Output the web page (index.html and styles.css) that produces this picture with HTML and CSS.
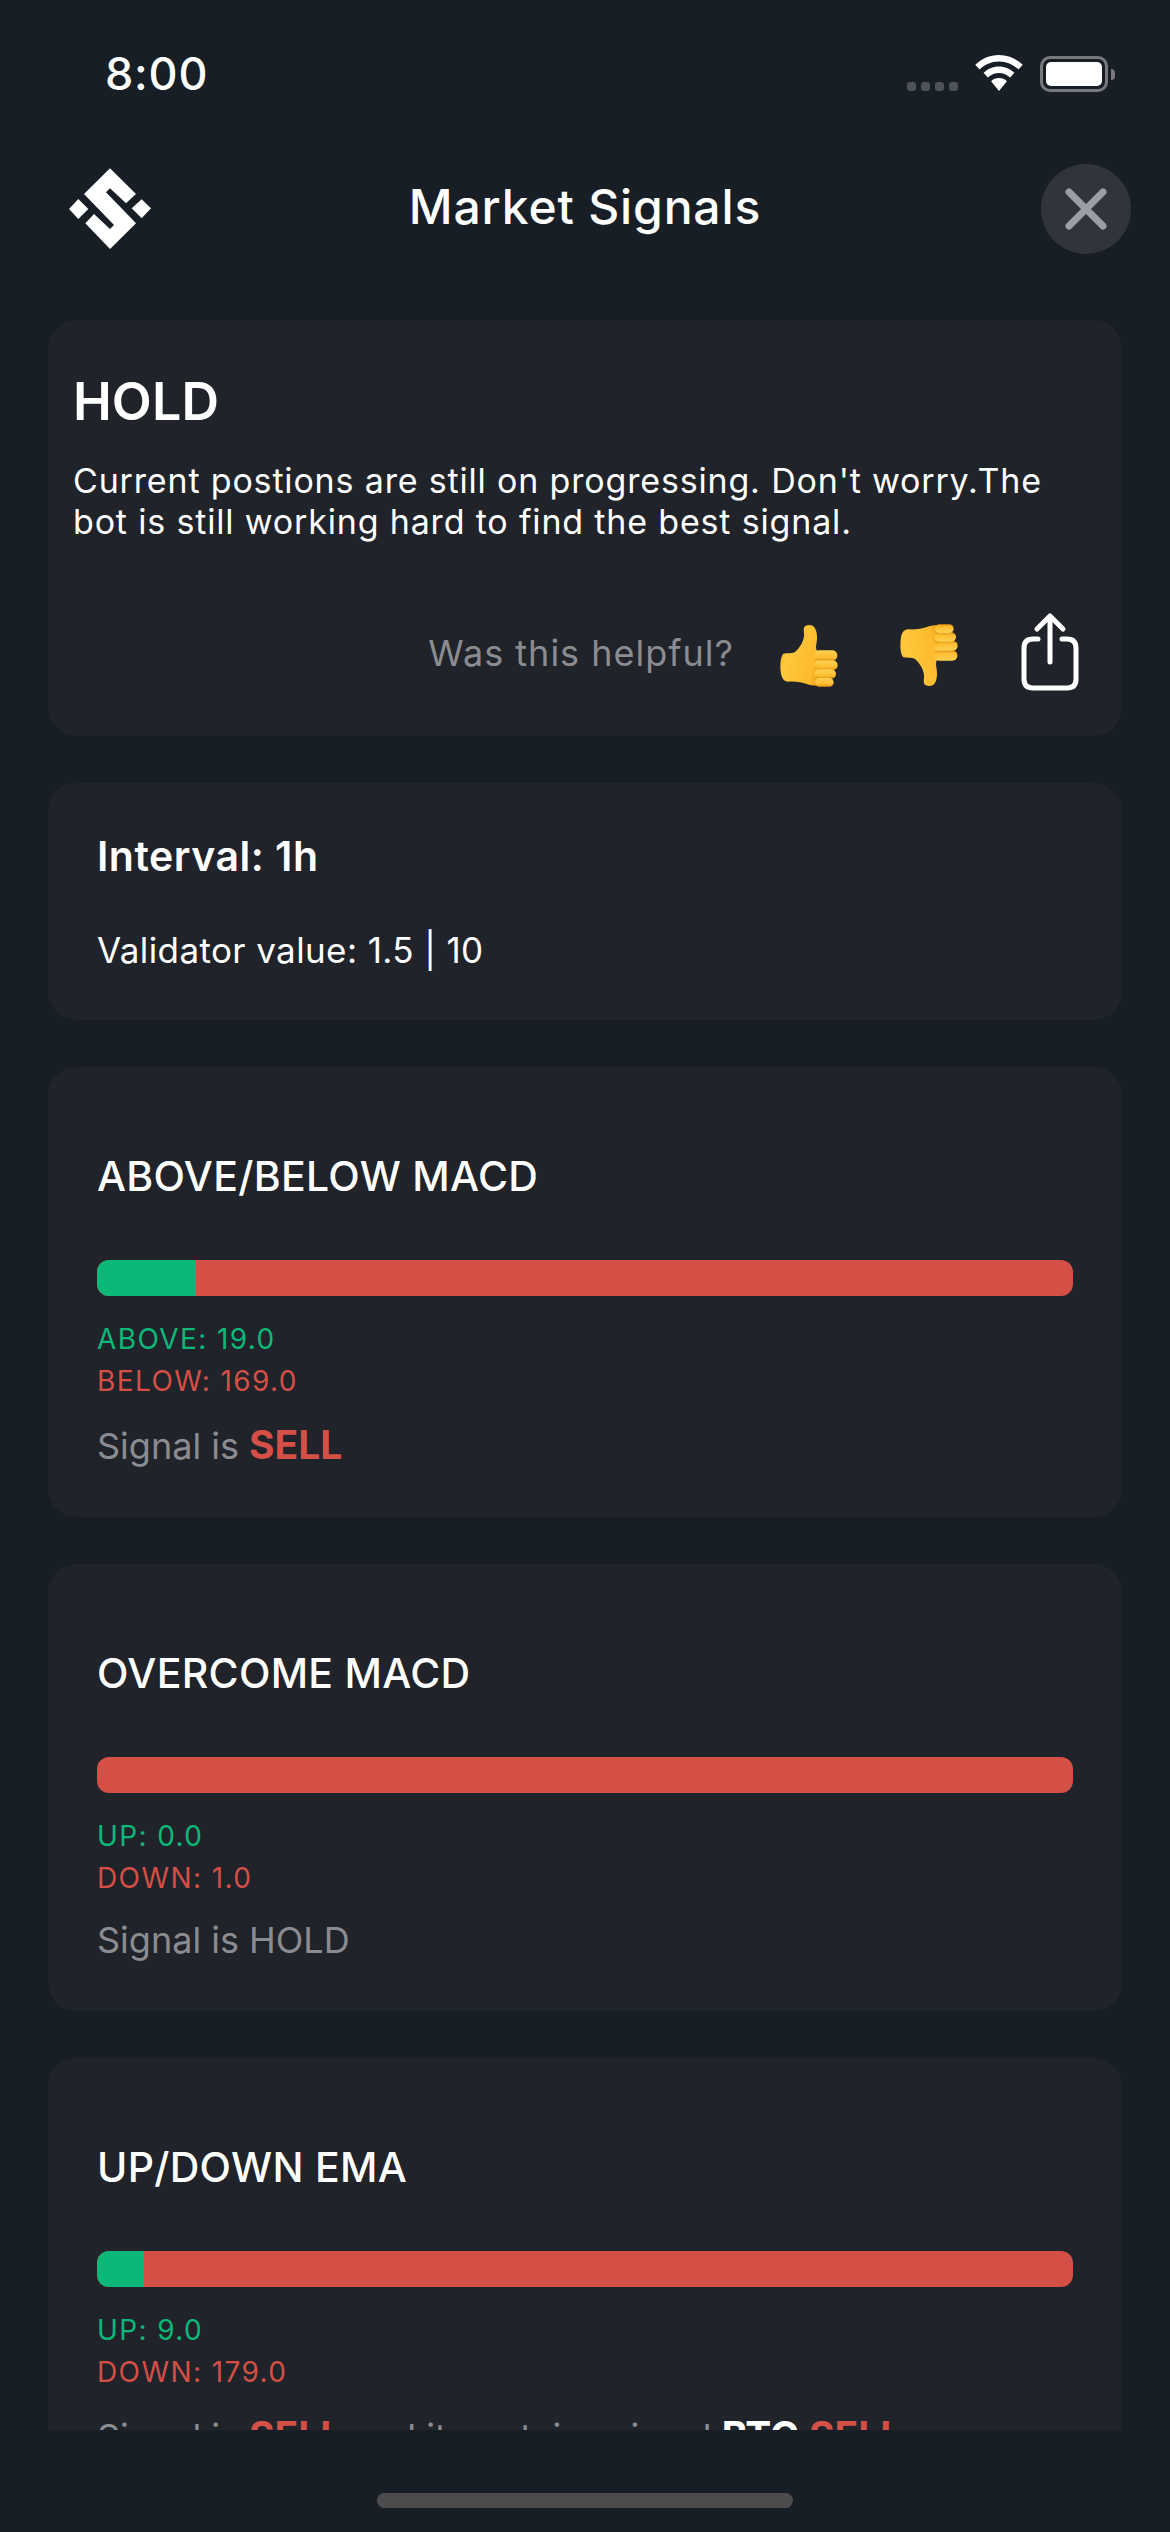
FILE: index.html
```html
<!DOCTYPE html>
<html lang="en">
<head>
<meta charset="utf-8">
<title>Market Signals</title>
<link rel="stylesheet" href="styles.css">
</head>
<body>
<div class="screen">
  <div class="status">
    <span class="time">8:00</span>
    <div class="status-icons">
      <div class="dots"><i></i><i></i><i></i><i></i></div>
      <svg class="wifi" width="48" height="36" viewBox="0 0 48 36"><path d="M24 0C14.800 0 6.500 3.700 0.300 9.800L4.500 14.500C9.500 9.500 16.400 6.400 24 6.400s14.500 3.100 19.500 8.100l4.200-4.700C41.500 3.700 33.200 0 24 0z" fill="#fff"/><path d="M24 11.500c-6 0-11.400 2.400-15.400 6.300l4.200 4.700c2.900-2.800 6.900-4.600 11.200-4.600s8.300 1.800 11.200 4.600l4.200-4.700C35.400 13.900 30 11.500 24 11.500z" fill="#fff"/><path d="M24 23c-3.100 0-5.900 1.200-7.900 3.200L24 36l7.900-9.800C29.900 24.200 27.100 23 24 23z" fill="#fff"/></svg>
      <div class="battery"><div class="battery-shell"><div class="battery-fill"></div></div><div class="battery-nub"></div></div>
    </div>
  </div>
  <header class="topbar">
    <svg class="logo" width="100" height="100" viewBox="0 0 300 300"><path fill="#fff" d="M150 25L228 102L198 130L150 85L138 97L228 190L150 267L76 190L102 162L150 207L162 195L72 102Z"/><path fill="#fff" d="M245 118L273 145L245 175L215 145Z"/><path fill="#fff" d="M55 117L85 147L55 177L27 147Z"/></svg>
    <h1 class="title">Market Signals</h1>
    <button class="close" aria-label="Close"><svg width="42" height="42" viewBox="0 0 42 42"><path d="M4 4L38 38M38 4L4 38" stroke="#9c9da6" stroke-width="7" stroke-linecap="round"/></svg></button>
  </header>
  <main class="scroll">
    <section class="card card-hold">
      <h2 class="hold">HOLD</h2>
      <p class="desc">Current postions are still on progressing. Don't worry.The bot is still working hard to find the best signal.</p>
      <div class="feedback">
        <span class="helpful">Was this helpful?</span>
        <svg class="thumb" width="100" height="100" viewBox="0 0 300 300"><use href="#hand"/></svg>
        <svg class="thumb thumb-down" width="100" height="100" viewBox="0 0 300 300"><use href="#hand" transform="translate(0 315) scale(1 -1)"/></svg>
        <svg class="share" width="100" height="100" viewBox="0 0 100 100"><path d="M38 36H33C27 36 24 39 24 45V76C24 82 27 85 33 85H67C73 85 76 82 76 76V45C76 39 73 36 67 36H62M50 59V14M37 26L50 13L63 26" fill="none" stroke="#fff" stroke-width="5" stroke-linecap="round" stroke-linejoin="round"/></svg>
      </div>
    </section>
    <section class="card card-interval">
      <h3 class="interval">Interval: 1h</h3>
      <p class="validator">Validator value: 1.5 | 10</p>
    </section>
    <section class="card card-signal">
      <h3 class="sig-title">ABOVE/BELOW MACD</h3>
      <div class="bar"><div class="bar-up" style="width:10.1%"></div></div>
      <div class="legend"><div class="up">ABOVE: 19.0</div><div class="down">BELOW: 169.0</div></div>
      <p class="signal">Signal is <b class="sell">SELL</b></p>
    </section>
    <section class="card card-signal">
      <h3 class="sig-title">OVERCOME MACD</h3>
      <div class="bar"></div>
      <div class="legend"><div class="up">UP: 0.0</div><div class="down">DOWN: 1.0</div></div>
      <p class="signal">Signal is HOLD</p>
    </section>
    <section class="card card-signal">
      <h3 class="sig-title">UP/DOWN EMA</h3>
      <div class="bar"><div class="bar-up" style="width:4.8%"></div></div>
      <div class="legend"><div class="up">UP: 9.0</div><div class="down">DOWN: 179.0</div></div>
      <p class="signal">Signal is <b class="sell">SELL</b> and it contains signal <b class="btc">BTC</b> <b class="sell">SELL</b></p>
    </section>
  </main>
  <div class="home"><div class="home-bar"></div></div>
</div>
<svg class="defs" width="0" height="0">
  <defs>
    <linearGradient id="skin" x1="0" y1="0" x2="1" y2="0.3"><stop offset="0" stop-color="#f6a81f"/><stop offset="0.25" stop-color="#ffc83d"/><stop offset="0.8" stop-color="#fdbb2d"/><stop offset="1" stop-color="#ef9a12"/></linearGradient>
    <linearGradient id="finger" x1="0" y1="0" x2="0" y2="1"><stop offset="0" stop-color="#ffd04f"/><stop offset="0.7" stop-color="#fdbe32"/><stop offset="1" stop-color="#e68e0c"/></linearGradient>
    <g id="hand">
      <path fill="url(#skin)" d="M70 152C82 150 96 152 104 148C118 136 130 118 132 100C133 90 130 82 132 74C135 66 148 64 158 68C168 74 172 92 171 108C170 122 166 132 170 142L205 240C190 250 160 250 140 243C125 238 110 235 85 236C72 236 64 226 62 205C60 185 61 162 70 152Z"/>
      <rect x="162" y="142" width="70" height="31" rx="15" fill="url(#finger)"/>
      <rect x="162" y="172" width="71" height="29" rx="14" fill="url(#finger)"/>
      <rect x="163" y="199" width="65" height="28" rx="14" fill="url(#finger)"/>
      <rect x="165" y="225" width="56" height="26" rx="13" fill="url(#finger)"/>
    </g>
  </defs>
</svg>
</body>
</html>
```

FILE: styles.css
```css
* { box-sizing: border-box; }
html, body { margin: 0; padding: 0; background: #181e26; }
body { font-family: Inter, "Liberation Sans", sans-serif; color: #fff; }
h1, h2, h3, p { margin: 0; font-weight: 400; }

.screen { width: 1170px; height: 2532px; display: flex; flex-direction: column; overflow: hidden; background: #181e26; }

.status { height: 160px; display: flex; justify-content: space-between; align-items: flex-start; padding: 55px 55px 0 105px; flex: none; }
.time { font-size: 45px; line-height: 38px; font-weight: 500; letter-spacing: 0.8px; }
.status-icons { display: flex; align-items: flex-start; }
.dots { display: flex; gap: 5px; margin-top: 27px; margin-right: 17px; }
.dots i { width: 9px; height: 9px; border-radius: 3px; background: #4f5259; display: block; }
.wifi { display: block; margin-right: 17px; }
.battery { display: flex; align-items: center; height: 36px; margin-top: 1px; }
.battery-shell { width: 68px; height: 36px; border: 3px solid #77797e; border-radius: 10px; padding: 3px; }
.battery-fill { height: 100%; background: #fff; border-radius: 5px; }
.battery-nub { width: 4px; height: 11px; margin-left: 3px; background: #77797e; border-radius: 0 4px 4px 0; }

.topbar { height: 100px; flex: none; display: flex; align-items: center; justify-content: space-between; padding: 0 39px 0 60px; position: relative; }
.logo { display: block; }
.title { position: absolute; left: 0; right: 0; margin-top: -6px; text-align: center; font-size: 48px; font-weight: 500; line-height: 58px; letter-spacing: 0.85px; }
.close { width: 90px; height: 90px; border-radius: 50%; border: 0; padding: 0; background: #31343c; display: flex; align-items: center; justify-content: center; margin-top: -2px; }
.close svg { display: block; }

.scroll { height: 2170px; flex: none; padding: 60px 48px 0; display: flex; flex-direction: column; gap: 47px; overflow: hidden; }
.card { background: #20232a; border-radius: 28px; flex: none; }

.card-hold { height: 416px; padding: 52px 22px 0 25px; }
.hold { font-size: 52px; font-weight: 600; line-height: 60px; letter-spacing: 0.1px; }
.desc { font-size: 34px; line-height: 41px; margin-top: 28px; letter-spacing: 0.83px; padding-right: 20px; }
.feedback { display: flex; align-items: center; justify-content: flex-end; margin-top: 61px; }
.helpful { font-size: 36px; color: #8b8c91; margin-right: 26px; letter-spacing: 1px; }
.thumb { display: block; margin-right: 20px; }
.share { display: block; }
.defs { position: absolute; }

.card-interval { height: 237px; padding: 49px 49px 0; }
.interval { font-size: 41px; font-weight: 600; line-height: 48px; letter-spacing: 0.5px; }
.validator { font-size: 35px; line-height: 44px; margin-top: 48px; letter-spacing: 0.4px; }

.card-signal { padding: 85px 49px 49px; }
.sig-title { font-size: 41px; font-weight: 500; line-height: 48px; letter-spacing: 0.3px; }
.bar { height: 36px; margin-top: 60px; border-radius: 12px; background: #d44f45; overflow: hidden; }
.bar-up { height: 100%; background: #0cb878; }
.legend { margin-top: 22px; font-size: 28px; line-height: 42px; letter-spacing: 1.4px; }
.up { color: #0cb878; }
.down { color: #d44f45; }
.signal { margin-top: 19px; font-size: 36px; color: #8b8c91; white-space: nowrap; }
.sell { color: #d44f45; font-size: 39px; font-weight: 700; }
.btc { color: #fff; font-size: 39px; font-weight: 700; }

.home { flex: 1; display: flex; justify-content: center; padding-top: 63px; }
.home-bar { width: 416px; height: 15px; border-radius: 8px; background: #4d4d4f; }
```
